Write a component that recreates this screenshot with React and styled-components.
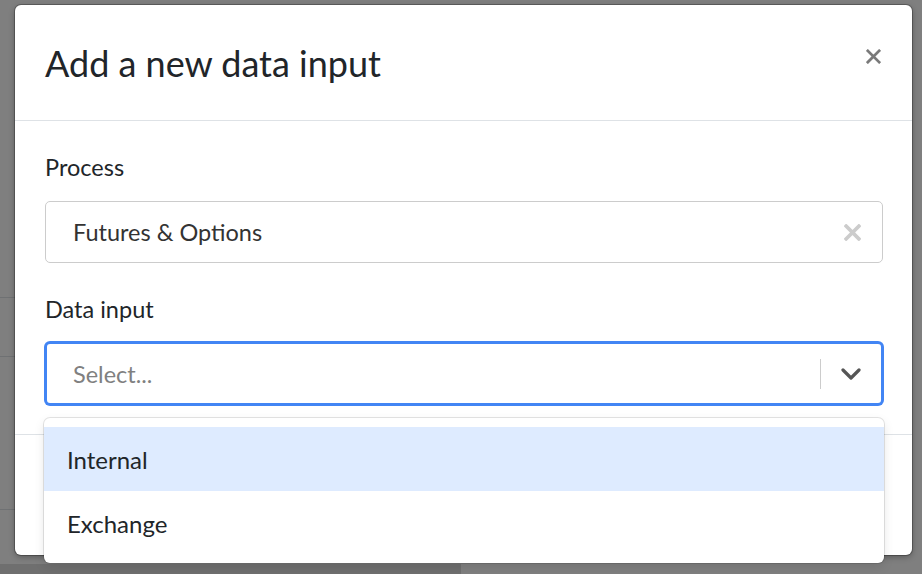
import { createGlobalStyle, styled } from "styled-components"

const GlobalStyle = createGlobalStyle`
  html, body {
    margin: 0;
    padding: 0;
  }
  body {
    font-family: Lato, "Open Sans", sans-serif;
    color: #212529;
  }
  * {
    box-sizing: border-box;
  }
`

const Page = styled.div`
  position: relative;
  height: 574px;
  overflow: hidden;
  background: #fff;
`

const BgTable = styled.div`
  width: 50%;
  display: flex;
  flex-direction: column;
`

const BgRow = styled.div`
  height: ${(p) => p.$h}px;
  border-bottom: 1px solid #dee2e6;
`

const BgFooter = styled.div`
  margin-top: 54px;
  height: 10px;
  width: 50%;
  background: #dedede;
`

const Overlay = styled.div`
  position: absolute;
  inset: 0;
  background: rgba(0, 0, 0, 0.5);
  padding: 5px 0 0 15px;
`

const Modal = styled.div`
  position: relative;
  width: 897px;
  height: 550px;
  background: #fff;
  border-radius: 6px;
  box-shadow: 0 0 0 1px rgba(0, 0, 0, 0.25), 0 2px 6px rgba(0, 0, 0, 0.3);
  display: flex;
  flex-direction: column;
`

const Header = styled.div`
  height: 116px;
  flex-shrink: 0;
  padding: 0 31px 0 30px;
  display: flex;
  align-items: center;
  justify-content: space-between;
  border-bottom: 1px solid #dee2e6;
`

const Title = styled.h2`
  margin: 0;
  font-size: 36px;
  font-weight: 400;
  line-height: 1;
  color: #212529;
`

const CloseButton = styled.button`
  border: 0;
  background: none;
  padding: 0;
  width: 15px;
  height: 15px;
  display: flex;
  cursor: pointer;
  color: #7a7a7a;
  margin-top: -12px;
`

const Body = styled.div`
  height: 313px;
  flex-shrink: 0;
  padding: 32px 29px 0 30px;
  display: flex;
  flex-direction: column;
`

const Label = styled.label`
  display: block;
  font-size: 23.5px;
  line-height: 28px;
  margin-bottom: ${(p) => p.$mb || 20}px;
  color: #212529;
`

const Field = styled.div`
  position: relative;
  margin-bottom: ${(p) => p.$mb || 0}px;
`

const Control = styled.div`
  height: ${(p) => (p.$focused ? 63 : 62)}px;
  border: ${(p) => (p.$focused ? "2px solid #4285f4" : "1px solid #ccc")};
  box-shadow: ${(p) => (p.$focused ? "0 0 0 1px #4285f4" : "none")};
  border-radius: 5px;
  display: flex;
  align-items: center;
  padding-left: ${(p) => (p.$focused ? 26 : 27)}px;
  background: #fff;
`

const Value = styled.div`
  flex: 1;
  font-size: 23.5px;
  color: ${(p) => (p.$placeholder ? "#808080" : "#333")};
`

const Indicator = styled.div`
  width: ${(p) => p.$w}px;
  display: flex;
  justify-content: center;
  align-items: center;
  color: ${(p) => p.$color};
`

const Separator = styled.span`
  width: 1px;
  height: 30px;
  background: #ccc;
`

const Footer = styled.div`
  flex: 1;
  border-top: 1px solid #dee2e6;
`

const Menu = styled.div`
  position: absolute;
  top: calc(100% + 13px);
  left: -1px;
  right: -1px;
  z-index: 2;
  background: #fff;
  border-radius: 6px;
  padding: 9px 0 8px;
  box-shadow: 0 0 0 1px rgba(0, 0, 0, 0.1), 0 4px 11px rgba(0, 0, 0, 0.1);
`

const Option = styled.div`
  height: 64px;
  display: flex;
  align-items: center;
  padding-left: 23px;
  font-size: 24px;
  color: #212529;
  background: ${(p) => (p.$active ? "#deebff" : "transparent")};
`

function Cross({ size, stroke }) {
  return (
    <svg width={size} height={size} viewBox="0 0 16 16" fill="none">
      <path
        d="M2 2 L14 14 M14 2 L2 14"
        stroke="currentColor"
        strokeWidth={stroke}
        strokeLinecap="square"
      />
    </svg>
  )
}

function Chevron() {
  return (
    <svg width="20" height="12" viewBox="0 0 20 12" fill="none">
      <path
        d="M2 2 L10 10 L18 2"
        stroke="currentColor"
        strokeWidth="3.2"
        strokeLinecap="round"
        strokeLinejoin="round"
      />
    </svg>
  )
}

export default function App() {
  return (
    <>
      <GlobalStyle />
      <Page>
        <BgTable>
          <BgRow $h={298} />
          <BgRow $h={59} />
          <BgRow $h={153} />
        </BgTable>
        <BgFooter />
        <Overlay>
          <Modal>
            <Header>
              <Title>Add a new data input</Title>
              <CloseButton aria-label="Close">
                <Cross size={15} stroke={3} />
              </CloseButton>
            </Header>
            <Body>
              <Label>Process</Label>
              <Field $mb={32}>
                <Control>
                  <Value>Futures &amp; Options</Value>
                  <Indicator $w={60} $color="#ccc">
                    <Cross size={17} stroke={3.4} />
                  </Indicator>
                </Control>
              </Field>
              <Label $mb={19}>Data input</Label>
              <Field>
                <Control $focused>
                  <Value $placeholder>Select...</Value>
                  <Separator />
                  <Indicator $w={60} $color="#555">
                    <Chevron />
                  </Indicator>
                </Control>
                <Menu>
                  <Option $active>Internal</Option>
                  <Option>Exchange</Option>
                </Menu>
              </Field>
            </Body>
            <Footer />
          </Modal>
        </Overlay>
      </Page>
    </>
  )
}
